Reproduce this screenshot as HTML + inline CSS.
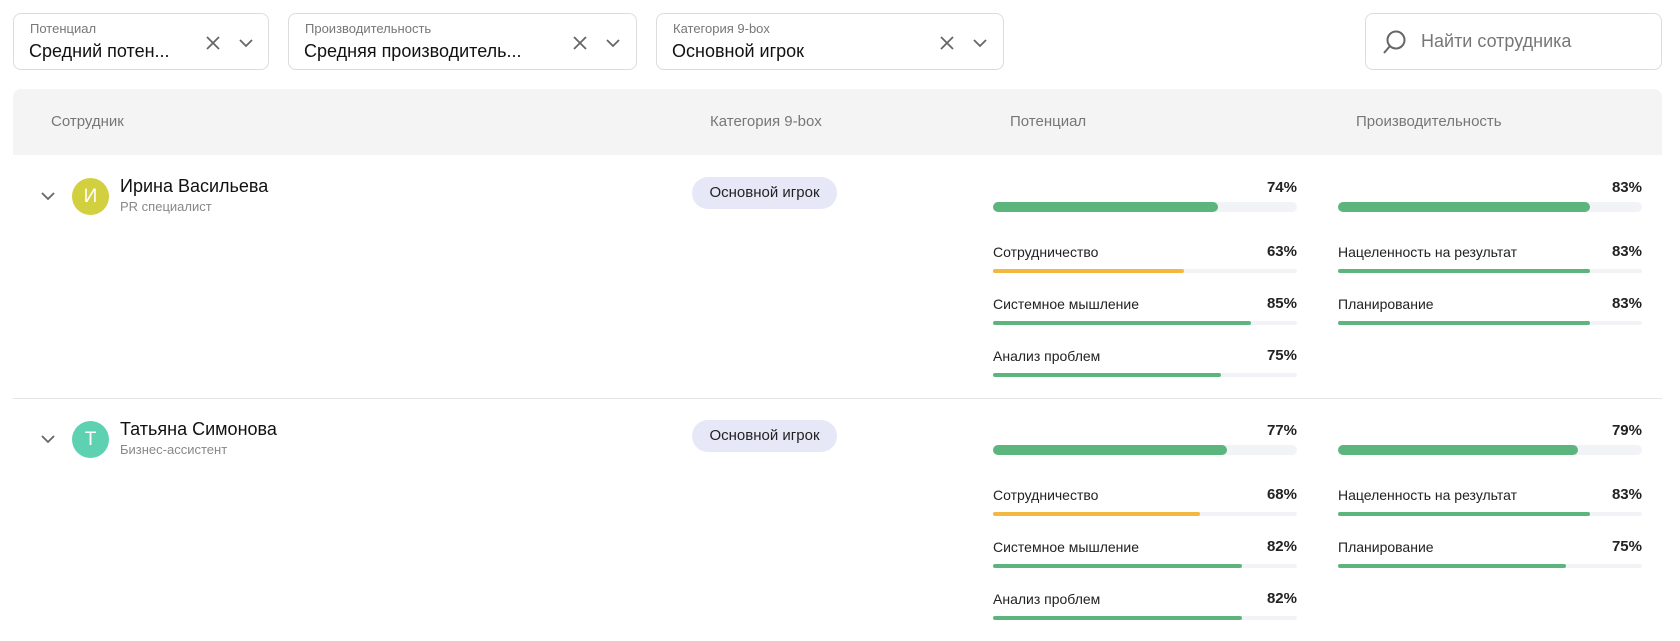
<!DOCTYPE html>
<html><head><meta charset="utf-8"><style>
*{margin:0;padding:0;box-sizing:border-box}
body{width:1680px;height:641px;background:#fff;font-family:"Liberation Sans","DejaVu Sans",sans-serif;color:#1d1d1f;position:relative;overflow:hidden;white-space:nowrap}
.a{position:absolute}
.row{position:absolute;left:0;width:1680px;height:240px}
.flt{position:absolute;top:13px;height:57px;border:1px solid #dcdcdc;border-radius:8px;background:#fff}
.flt .l{position:absolute;left:16px;top:7px;font-size:13px;color:#777}
.flt .v{position:absolute;left:15px;top:27px;font-size:18px;color:#111}
.hdr{position:absolute;left:13px;top:89px;width:1649px;height:66px;background:#f4f4f4;border-radius:8px 8px 0 0}
.ht{position:absolute;top:113px;font-size:15px;color:#777}
.t{position:absolute;font-size:14px;color:#222;line-height:16px}
.p{position:absolute;font-size:15px;color:#222;font-weight:bold;line-height:16px;text-align:right;width:60px}
.tr{position:absolute;background:#f2f3f6;border-radius:5px}
.fl{position:absolute;left:0;top:0;bottom:0;border-radius:5px}
.g{background:#5db57e}.y{background:#f2b840}
.badge{position:absolute;left:692px;width:145px;height:32px;border-radius:16px;background:#e6e8f8;font-size:15px;text-align:center;line-height:32px;color:#222}
.av{position:absolute;left:72px;width:37px;height:37px;border-radius:50%;color:#fff;font-size:19px;text-align:center;line-height:37px}
.nm{position:absolute;left:120px;font-size:18px;color:#111}
.sb{position:absolute;left:120px;font-size:13px;color:#888}
</style></head><body>
<div class="flt" style="left:13px;width:256px"><div class="l">Потенциал</div><div class="v">Средний потен...</div>
<svg class="a" style="left:190px;top:20px" width="60" height="18"><path d="M3 3l12 12M15 3L3 15" stroke="#666" stroke-width="1.8" fill="none"/><path d="M36 6l6 6 6-6" stroke="#666" stroke-width="1.8" fill="none"/></svg></div>
<div class="flt" style="left:288px;width:349px"><div class="l">Производительность</div><div class="v">Средняя производитель...</div>
<svg class="a" style="left:282px;top:20px" width="60" height="18"><path d="M3 3l12 12M15 3L3 15" stroke="#666" stroke-width="1.8" fill="none"/><path d="M36 6l6 6 6-6" stroke="#666" stroke-width="1.8" fill="none"/></svg></div>
<div class="flt" style="left:656px;width:348px"><div class="l">Категория 9-box</div><div class="v">Основной игрок</div>
<svg class="a" style="left:281px;top:20px" width="60" height="18"><path d="M3 3l12 12M15 3L3 15" stroke="#666" stroke-width="1.8" fill="none"/><path d="M36 6l6 6 6-6" stroke="#666" stroke-width="1.8" fill="none"/></svg></div>
<div class="flt" style="left:1365px;width:297px"><svg class="a" style="left:15px;top:15px" width="28" height="28"><circle cx="15" cy="11" r="8.5" stroke="#666" stroke-width="2" fill="none"/><path d="M9 17L3 24" stroke="#666" stroke-width="2"/></svg><div class="a" style="left:55px;top:17px;font-size:18px;color:#777">Найти сотрудника</div></div>

<div class="hdr"></div>
<div class="ht" style="left:51px">Сотрудник</div>
<div class="ht" style="left:710px">Категория 9-box</div>
<div class="ht" style="left:1010px">Потенциал</div>
<div class="ht" style="left:1356px">Производительность</div>

<div class="row" style="top:0">
<svg class="a" style="left:40px;top:191px" width="16" height="10"><path d="M2 2l6 6 6-6" stroke="#666" stroke-width="1.8" fill="none"/></svg>
<div class="av" style="top:178px;background:#d2d03f">И</div>
<div class="nm" style="top:176px">Ирина Васильева</div>
<div class="sb" style="top:199px">PR специалист</div>
<div class="badge" style="top:177px">Основной игрок</div>
<div class="p" style="left:1237px;top:180px">74%</div>
<div class="tr" style="left:993px;top:202px;width:304px;height:10px"><div class="fl g" style="width:225px"></div></div>
<div class="t" style="left:993px;top:244px">Сотрудничество</div><div class="p" style="left:1237px;top:244px">63%</div>
<div class="tr" style="left:993px;top:269px;width:304px;height:4px"><div class="fl y" style="width:191px"></div></div>
<div class="t" style="left:993px;top:296px">Системное мышление</div><div class="p" style="left:1237px;top:296px">85%</div>
<div class="tr" style="left:993px;top:321px;width:304px;height:4px"><div class="fl g" style="width:258px"></div></div>
<div class="t" style="left:993px;top:348px">Анализ проблем</div><div class="p" style="left:1237px;top:348px">75%</div>
<div class="tr" style="left:993px;top:373px;width:304px;height:4px"><div class="fl g" style="width:228px"></div></div>
<div class="p" style="left:1582px;top:180px">83%</div>
<div class="tr" style="left:1338px;top:202px;width:304px;height:10px"><div class="fl g" style="width:252px"></div></div>
<div class="t" style="left:1338px;top:244px">Нацеленность на результат</div><div class="p" style="left:1582px;top:244px">83%</div>
<div class="tr" style="left:1338px;top:269px;width:304px;height:4px"><div class="fl g" style="width:252px"></div></div>
<div class="t" style="left:1338px;top:296px">Планирование</div><div class="p" style="left:1582px;top:296px">83%</div>
<div class="tr" style="left:1338px;top:321px;width:304px;height:4px"><div class="fl g" style="width:252px"></div></div>
</div>
<div class="a" style="left:13px;top:398px;width:1649px;height:1px;background:#e4e4e4"></div>
<div class="row" style="top:243px">
<svg class="a" style="left:40px;top:191px" width="16" height="10"><path d="M2 2l6 6 6-6" stroke="#666" stroke-width="1.8" fill="none"/></svg>
<div class="av" style="top:178px;background:#5fd1b3">Т</div>
<div class="nm" style="top:176px">Татьяна Симонова</div>
<div class="sb" style="top:199px">Бизнес-ассистент</div>
<div class="badge" style="top:177px">Основной игрок</div>
<div class="p" style="left:1237px;top:180px">77%</div>
<div class="tr" style="left:993px;top:202px;width:304px;height:10px"><div class="fl g" style="width:234px"></div></div>
<div class="t" style="left:993px;top:244px">Сотрудничество</div><div class="p" style="left:1237px;top:244px">68%</div>
<div class="tr" style="left:993px;top:269px;width:304px;height:4px"><div class="fl y" style="width:207px"></div></div>
<div class="t" style="left:993px;top:296px">Системное мышление</div><div class="p" style="left:1237px;top:296px">82%</div>
<div class="tr" style="left:993px;top:321px;width:304px;height:4px"><div class="fl g" style="width:249px"></div></div>
<div class="t" style="left:993px;top:348px">Анализ проблем</div><div class="p" style="left:1237px;top:348px">82%</div>
<div class="tr" style="left:993px;top:373px;width:304px;height:4px"><div class="fl g" style="width:249px"></div></div>
<div class="p" style="left:1582px;top:180px">79%</div>
<div class="tr" style="left:1338px;top:202px;width:304px;height:10px"><div class="fl g" style="width:240px"></div></div>
<div class="t" style="left:1338px;top:244px">Нацеленность на результат</div><div class="p" style="left:1582px;top:244px">83%</div>
<div class="tr" style="left:1338px;top:269px;width:304px;height:4px"><div class="fl g" style="width:252px"></div></div>
<div class="t" style="left:1338px;top:296px">Планирование</div><div class="p" style="left:1582px;top:296px">75%</div>
<div class="tr" style="left:1338px;top:321px;width:304px;height:4px"><div class="fl g" style="width:228px"></div></div>
</div>
</body></html>
